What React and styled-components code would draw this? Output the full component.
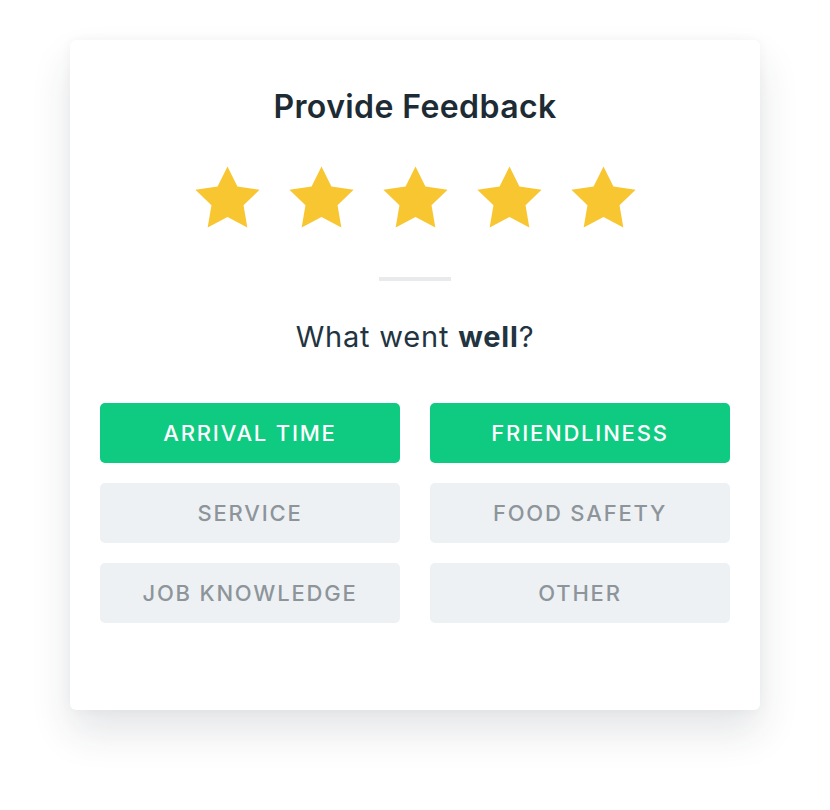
import React, { useState } from "react";
import styled, { createGlobalStyle } from "styled-components";

const GlobalStyle = createGlobalStyle`
  body {
    margin: 0;
    background: #ffffff;
    font-family: Inter, "Open Sans", sans-serif;
  }
`;

const OPTIONS = [
  "Arrival Time",
  "Friendliness",
  "Service",
  "Food Safety",
  "Job Knowledge",
  "Other",
];

const Star = () => (
  <svg width="77" height="77" viewBox="0 0 24 24">
    <path
      fill="#f8c631"
      d="M12 2l3.09 6.26L22 9.27l-5 4.87 1.18 6.88L12 17.77l-6.18 3.25L7 14.14 2 9.27l6.91-1.01L12 2z"
    />
  </svg>
);

const App = () => {
  const [picked, setPicked] = useState(["Arrival Time", "Friendliness"]);

  const toggle = (name) =>
    setPicked((p) => (p.includes(name) ? p.filter((n) => n !== name) : [...p, name]));

  return (
    <Page>
      <GlobalStyle />
      <Card>
        <Title>Provide Feedback</Title>
        <Stars>
          {[0, 1, 2, 3, 4].map((i) => (
            <Star key={i} />
          ))}
        </Stars>
        <Divider />
        <Question>
          What went <b>well</b>?
        </Question>
        <Options>
          {OPTIONS.map((name) => (
            <Option key={name} active={picked.includes(name)} onClick={() => toggle(name)}>
              {name}
            </Option>
          ))}
        </Options>
      </Card>
    </Page>
  );
};

export default App;

const Page = styled.div`
  padding: 40px 70px 100px;
`;

const Card = styled.div`
  width: 690px;
  height: 670px;
  box-sizing: border-box;
  background: #ffffff;
  border-radius: 6px;
  box-shadow: 0 22px 40px rgba(30, 40, 60, 0.12), 0 0 12px rgba(30, 40, 60, 0.04);
  padding: 48px 30px 0;
  display: flex;
  flex-direction: column;
  align-items: center;
`;

const Title = styled.h1`
  margin: 0;
  font-size: 32px;
  line-height: 38px;
  font-weight: 600;
  letter-spacing: 0.4px;
  color: #1d2b34;
`;

const Stars = styled.div`
  display: flex;
  gap: 17px;
  margin-top: 34px;
`;

const Divider = styled.div`
  width: 72px;
  height: 4px;
  background: #e9eaeb;
  margin-top: 40px;
`;

const Question = styled.p`
  margin: 39px 0 0;
  font-size: 29px;
  line-height: 34px;
  letter-spacing: 0.8px;
  color: #223440;
  b {
    font-weight: 700;
  }
`;

const Options = styled.div`
  align-self: stretch;
  display: grid;
  grid-template-columns: 1fr 1fr;
  column-gap: 30px;
  row-gap: 20px;
  margin-top: 49px;
`;

const Option = styled.button`
  height: 60px;
  border: none;
  border-radius: 5px;
  font-family: Inter, "Open Sans", sans-serif;
  font-size: 22px;
  font-weight: 500;
  letter-spacing: 1.8px;
  text-transform: uppercase;
  cursor: pointer;
  background: ${(p) => (p.active ? "#0ecb81" : "#edf1f4")};
  color: ${(p) => (p.active ? "#ffffff" : "#8d959a")};
`;
